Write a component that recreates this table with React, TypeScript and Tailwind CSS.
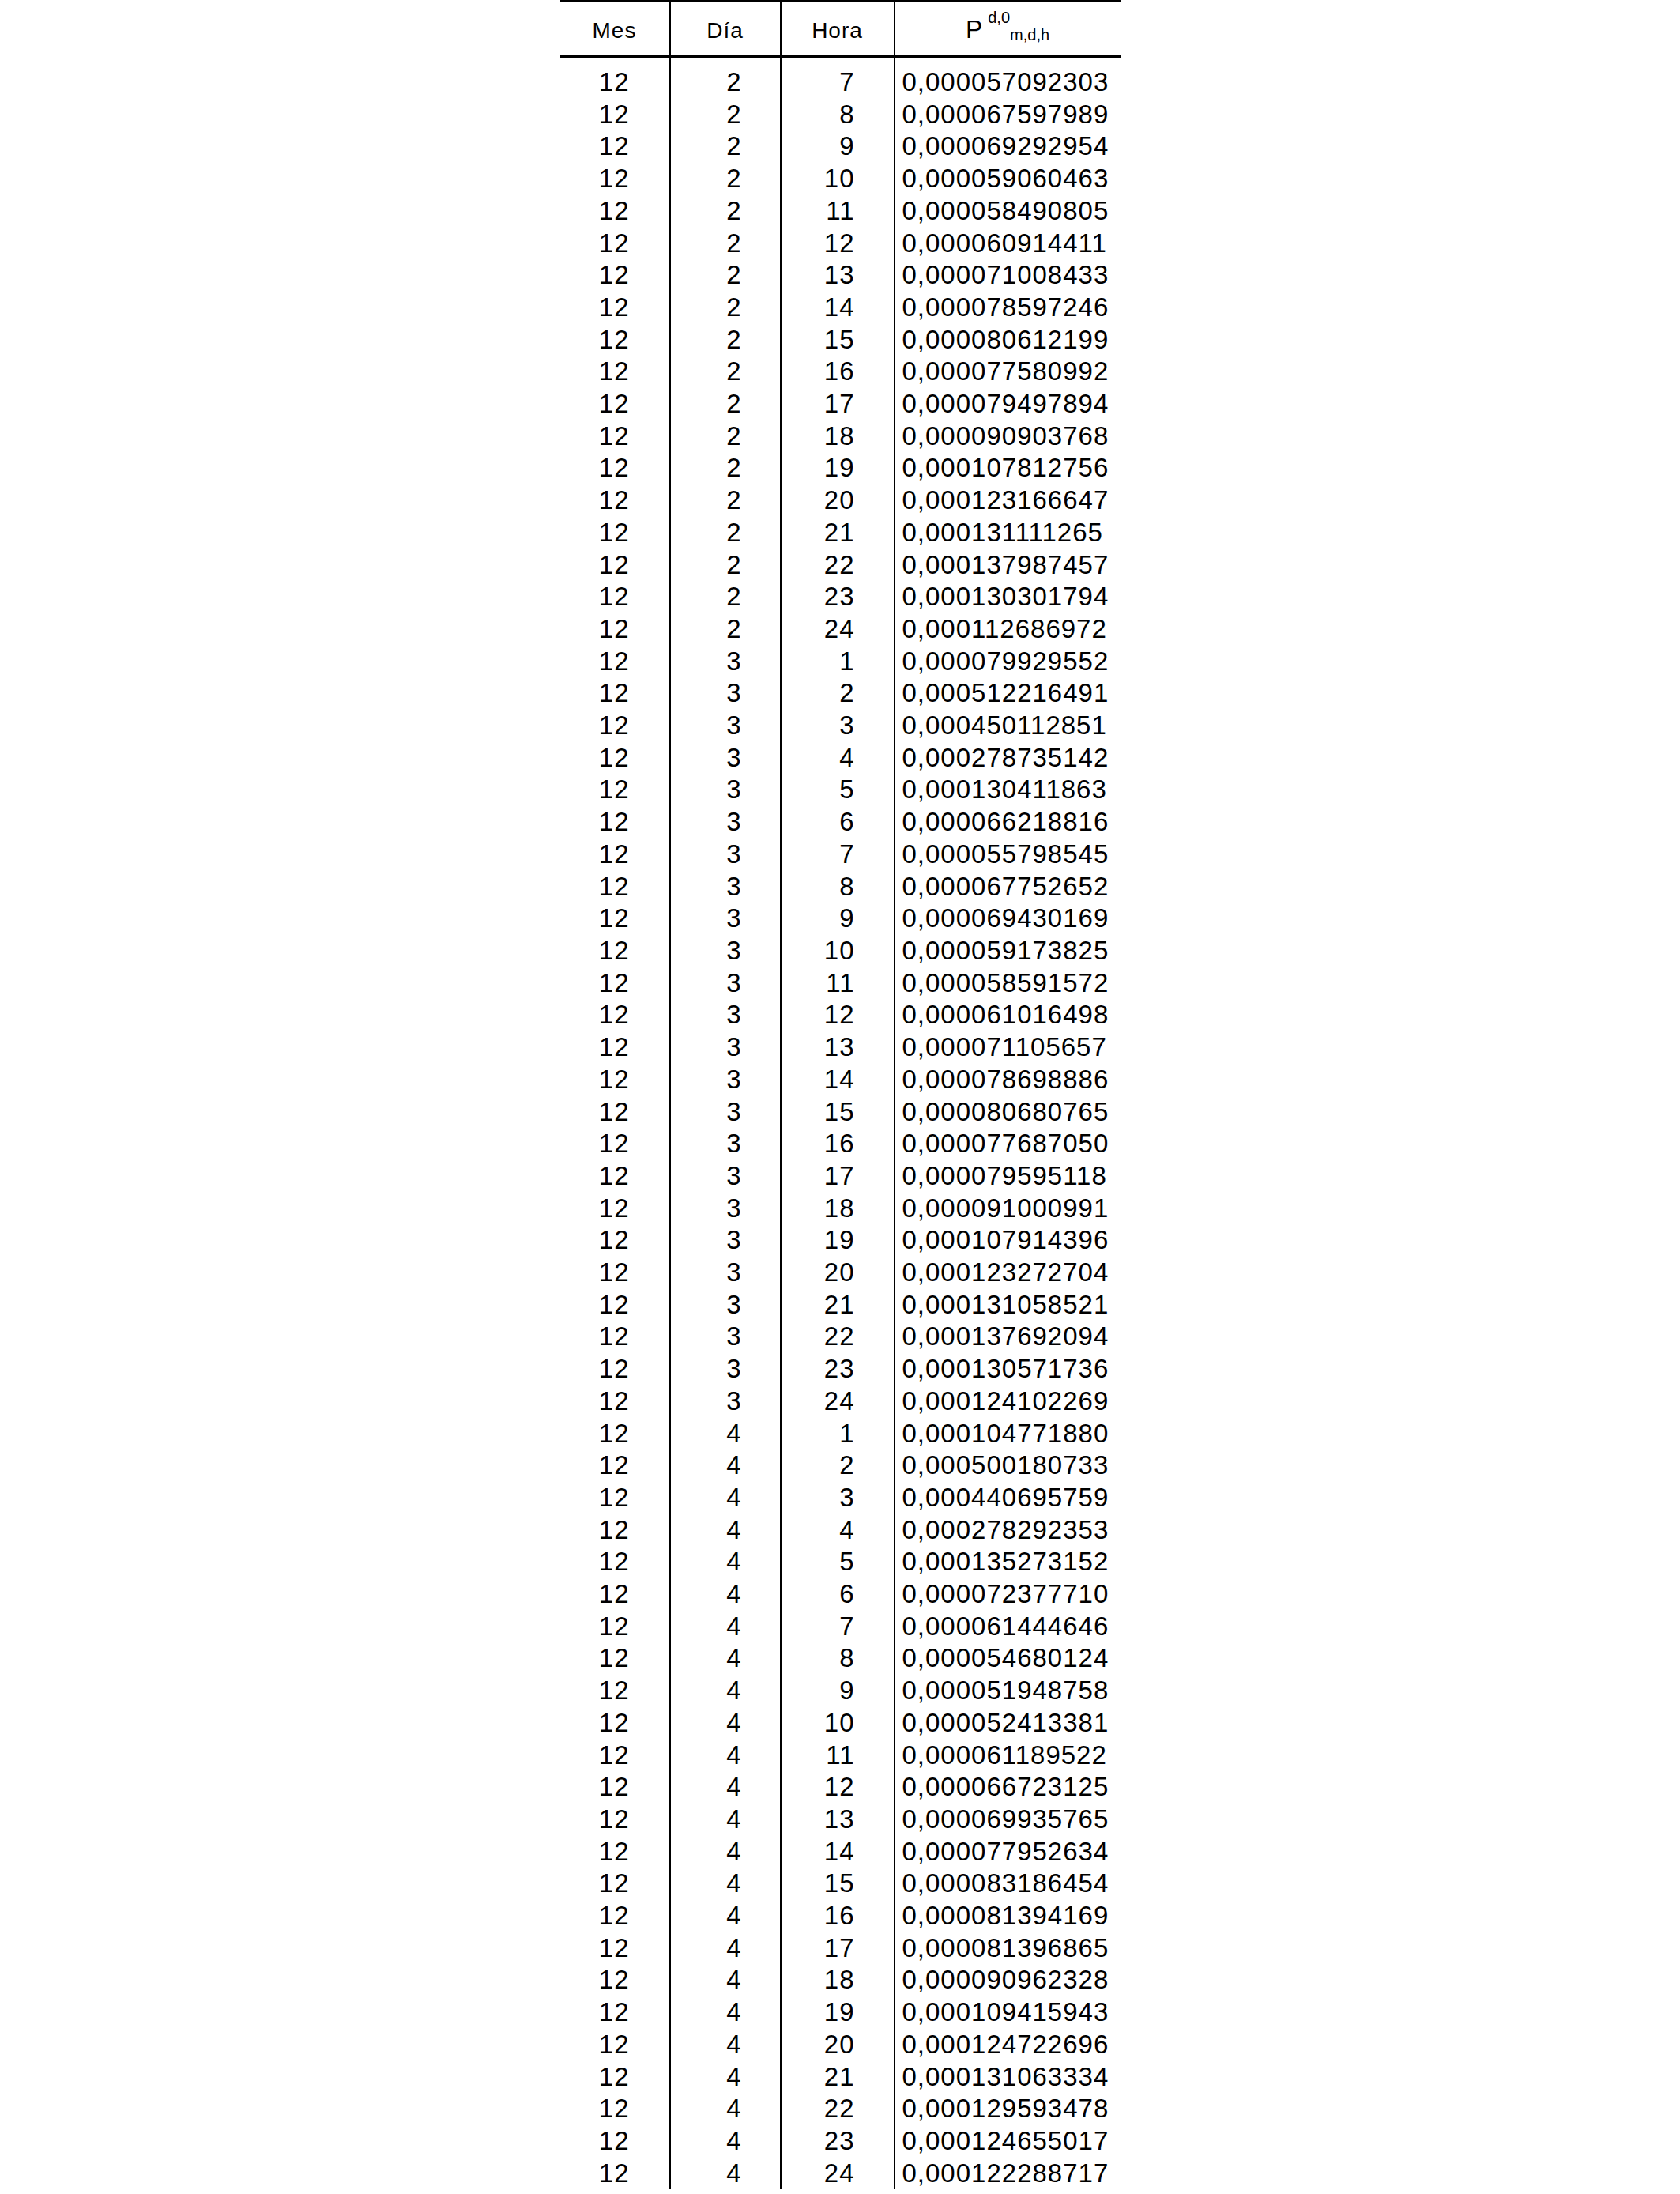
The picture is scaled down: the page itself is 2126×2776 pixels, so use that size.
const rows: [number, number, string][] = [
  [2, 7, '0,000057092303'],
  [2, 8, '0,000067597989'],
  [2, 9, '0,000069292954'],
  [2, 10, '0,000059060463'],
  [2, 11, '0,000058490805'],
  [2, 12, '0,000060914411'],
  [2, 13, '0,000071008433'],
  [2, 14, '0,000078597246'],
  [2, 15, '0,000080612199'],
  [2, 16, '0,000077580992'],
  [2, 17, '0,000079497894'],
  [2, 18, '0,000090903768'],
  [2, 19, '0,000107812756'],
  [2, 20, '0,000123166647'],
  [2, 21, '0,000131111265'],
  [2, 22, '0,000137987457'],
  [2, 23, '0,000130301794'],
  [2, 24, '0,000112686972'],
  [3, 1, '0,000079929552'],
  [3, 2, '0,000512216491'],
  [3, 3, '0,000450112851'],
  [3, 4, '0,000278735142'],
  [3, 5, '0,000130411863'],
  [3, 6, '0,000066218816'],
  [3, 7, '0,000055798545'],
  [3, 8, '0,000067752652'],
  [3, 9, '0,000069430169'],
  [3, 10, '0,000059173825'],
  [3, 11, '0,000058591572'],
  [3, 12, '0,000061016498'],
  [3, 13, '0,000071105657'],
  [3, 14, '0,000078698886'],
  [3, 15, '0,000080680765'],
  [3, 16, '0,000077687050'],
  [3, 17, '0,000079595118'],
  [3, 18, '0,000091000991'],
  [3, 19, '0,000107914396'],
  [3, 20, '0,000123272704'],
  [3, 21, '0,000131058521'],
  [3, 22, '0,000137692094'],
  [3, 23, '0,000130571736'],
  [3, 24, '0,000124102269'],
  [4, 1, '0,000104771880'],
  [4, 2, '0,000500180733'],
  [4, 3, '0,000440695759'],
  [4, 4, '0,000278292353'],
  [4, 5, '0,000135273152'],
  [4, 6, '0,000072377710'],
  [4, 7, '0,000061444646'],
  [4, 8, '0,000054680124'],
  [4, 9, '0,000051948758'],
  [4, 10, '0,000052413381'],
  [4, 11, '0,000061189522'],
  [4, 12, '0,000066723125'],
  [4, 13, '0,000069935765'],
  [4, 14, '0,000077952634'],
  [4, 15, '0,000083186454'],
  [4, 16, '0,000081394169'],
  [4, 17, '0,000081396865'],
  [4, 18, '0,000090962328'],
  [4, 19, '0,000109415943'],
  [4, 20, '0,000124722696'],
  [4, 21, '0,000131063334'],
  [4, 22, '0,000129593478'],
  [4, 23, '0,000124655017'],
  [4, 24, '0,000122288717'],
];

const cols = 'grid grid-cols-[138px_140px_144px_287px]';

export default function App() {
  return (
    <div className="min-h-screen bg-white text-black" style={{ fontFamily: '"Liberation Sans", Arial, sans-serif' }}>
      <div className="mx-auto w-[709px]">
        {/* header */}
        <div className={`${cols} h-[73px] border-t-2 border-b-[3px] border-black text-[28px] tracking-[1px]`}>
          <div className="flex items-center justify-center pt-[5px]">Mes</div>
          <div className="flex items-center justify-center border-l-2 border-black pt-[5px]">Día</div>
          <div className="flex items-center justify-center border-l-2 border-black pt-[5px]">Hora</div>
          <div className="flex items-center justify-center border-l-2 border-black pb-[7px] tracking-normal">
            <span className="leading-none">
              <span className="text-[32px]">P</span>
              <span className="ml-[7px] align-[19px] text-[20px]">d,0</span>
              <span className="align-[-3px] text-[20px]">m,d,h</span>
            </span>
          </div>
        </div>

        {/* body */}
        {rows.map(([dia, hora, val], i) => {
          const pad = i === 0 ? 'pt-[11px]' : '';
          return (
            <div key={i} className={`${cols} text-[33px] leading-[40.7px] tracking-[1px]`}>
              <div className={`pr-[50px] text-right ${pad}`}>12</div>
              <div className={`border-l-2 border-black pr-[48px] text-right ${pad}`}>{dia}</div>
              <div className={`border-l-2 border-black pr-[49px] text-right ${pad}`}>{hora}</div>
              <div className={`border-l-2 border-black pl-[9px] ${pad}`}>{val}</div>
            </div>
          );
        })}
      </div>
    </div>
  );
}
